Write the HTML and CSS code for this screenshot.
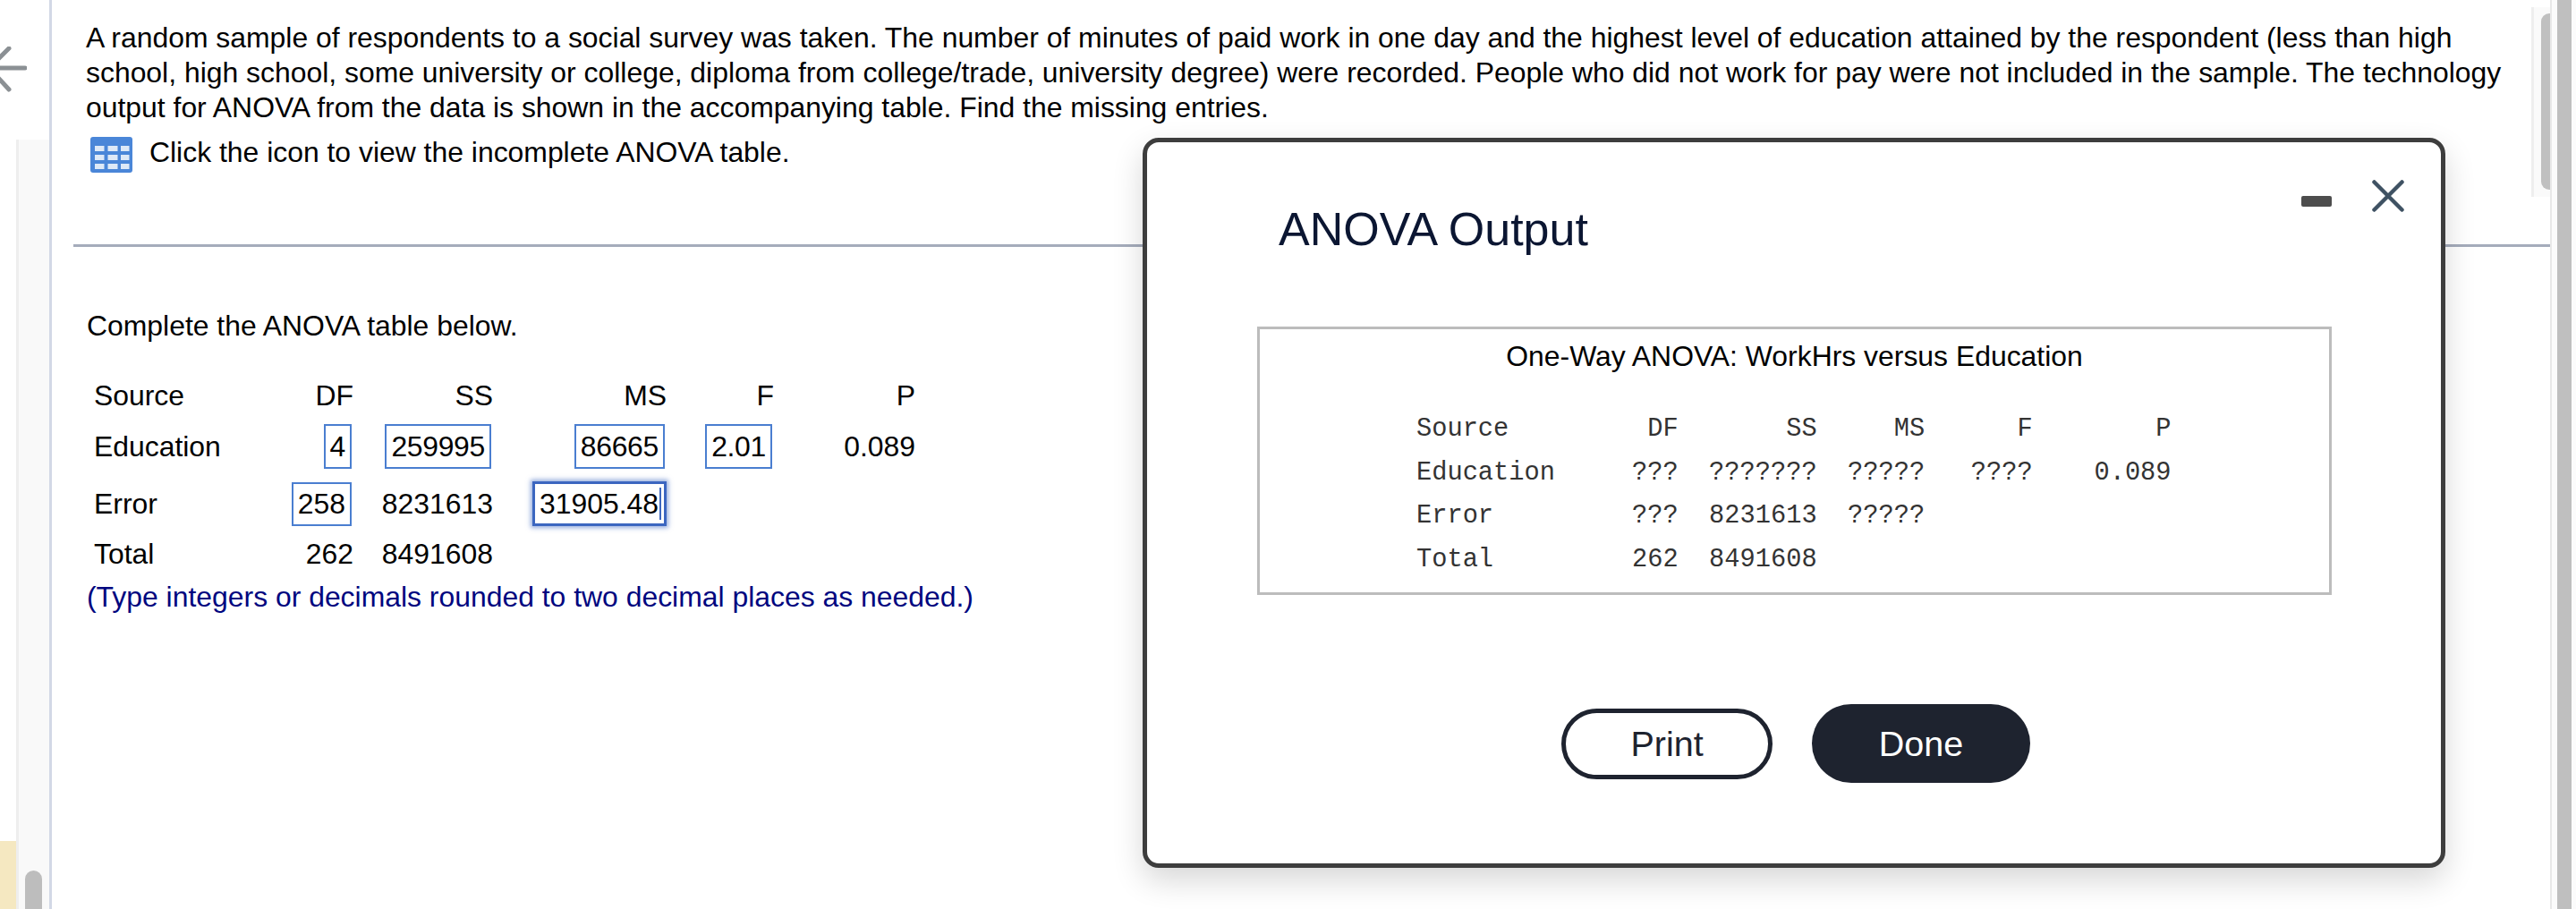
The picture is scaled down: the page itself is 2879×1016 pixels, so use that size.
FILE: index.html
```html
<!DOCTYPE html>
<html lang="en">
<head>
<meta charset="utf-8">
<title>ANOVA Output</title>
<link rel="stylesheet" href="styles.css">
</head>
<body>
<div class="page">
  <aside class="rail">
    <div class="rail-note"></div>
    <div class="rail-track"><div class="rail-thumb"></div></div>
  </aside>
  <svg class="back" width="30" height="52" viewBox="0 0 30 52"><path d="M28 24H-10M10 2L-12 24L10 48" fill="none" stroke="#8b9094" stroke-width="5" stroke-linecap="round" stroke-linejoin="round"/></svg>

  <main class="main">
    <section class="question">
      <p class="prompt">A random sample of respondents to a social survey was taken. The number of minutes of paid work in one day and the highest level of education attained by the respondent (less than high<br>school, high school, some university or college, diploma from college/trade, university degree) were recorded. People who did not work for pay were not included in the sample. The technology<br>output for ANOVA from the data is shown in the accompanying table. Find the missing entries.</p>
      <div class="table-link">
        <svg class="table-icon" width="47" height="40" viewBox="0 0 47 40"><rect width="47" height="40" rx="3" fill="#4a86d8"/><g fill="#fff" opacity=".82"><rect x="5" y="10" width="10.500" height="6"/><rect x="19.500" y="10" width="11" height="6"/><rect x="34" y="10" width="9.500" height="6"/><rect x="5" y="20" width="10.500" height="6"/><rect x="19.500" y="20" width="11" height="6"/><rect x="34" y="20" width="9.500" height="6"/><rect x="5" y="30" width="10.500" height="6"/><rect x="19.500" y="30" width="11" height="6"/><rect x="34" y="30" width="9.500" height="6"/></g></svg>
        <span>Click the icon to view the incomplete ANOVA table.</span>
      </div>
    </section>
    <hr class="rule">
    <section class="answer">
      <p class="instruction">Complete the ANOVA table below.</p>
      <div class="anova">
        <span class="label">Source</span><span class="num">DF</span><span class="num">SS</span><span class="num">MS</span><span class="num">F</span><span class="num">P</span>
        <span class="label">Education</span><span class="num"><span class="input tall">4</span></span><span class="num"><span class="input tall">259995</span></span><span class="num"><span class="input tall">86665</span></span><span class="num"><span class="input tall">2.01</span></span><span class="num">0.089</span>
        <span class="label">Error</span><span class="num"><span class="input">258</span></span><span class="num">8231613</span><span class="num"><span class="input focused">31905.48</span></span><span></span><span></span>
        <span class="label">Total</span><span class="num">262</span><span class="num">8491608</span><span></span><span></span><span></span>
      </div>
      <p class="hint">(Type integers or decimals rounded to two decimal places as needed.)</p>
    </section>
    <div class="inner-scroll"><div class="inner-thumb"></div></div>
  </main>

  <div class="outer-scroll"><div class="outer-thumb"></div></div>

  <div class="modal">
    <div class="modal-tools">
      <span class="minimize"></span>
      <svg width="36" height="36" viewBox="0 0 36 36"><path d="M2.500 2.500L33.500 33.500M33.500 2.500L2.500 33.500" stroke="#3f5263" stroke-width="4.500" stroke-linecap="round"/></svg>
    </div>
    <h1 class="modal-title">ANOVA Output</h1>
    <div class="output">
      <h2 class="output-title">One-Way ANOVA: WorkHrs versus Education</h2>
<pre class="output-data">Source         DF       SS     MS      F        P
Education     ???  ???????  ?????   ????    0.089
Error         ???  8231613  ?????
Total         262  8491608</pre>
    </div>
    <div class="actions">
      <button class="btn btn-outline">Print</button>
      <button class="btn btn-solid">Done</button>
    </div>
  </div>
</div>
</body>
</html>
```

FILE: styles.css
```css
* { box-sizing: border-box; }
html, body { margin: 0; height: 100%; overflow: hidden; background: #fff; }
body { font-family: "Liberation Sans", Arial, sans-serif; color: #000; }

.page { position: relative; display: flex; width: 2879px; height: 1016px; overflow: hidden; }

/* left rail */
.rail { flex: 0 0 58px; display: flex; border-right: 3px solid #d2d8e6; }
.rail-note { flex: 0 0 18px; margin-top: 940px; background: #f5e8c1; }
.rail-track { flex: 1; margin-top: 156px; padding: 817px 8px 0 7px; background: #f9f9f9; border-left: 3px solid #eeeeee; }
.rail-thumb { height: 60px; background: #bdbdbd; border-radius: 10px 10px 0 0; }
.back { position: absolute; left: 0; top: 52px; }

/* main column */
.main { position: relative; flex: 1; min-width: 0; }
.question { padding: 23px 0 0 38px; }
.prompt { margin: 0; font-size: 31.9px; line-height: 39px; white-space: nowrap; }
.table-link { display: flex; align-items: flex-start; gap: 19px; margin: 10px 0 0 5px; font-size: 31.9px; line-height: 40px; }
.table-icon { flex: none; margin-top: 3px; }
.rule { height: 3px; margin: 80px 0 0 24px; border: 0; background: #a5acbb; }

.answer { padding: 69px 0 0 39px; }
.instruction { margin: 0; font-size: 31.9px; line-height: 39px; }
.anova { display: grid; grid-template-columns: 195px 95px 156px 194px 120px 158px; grid-template-rows: 40px 74px 54px 58px; width: max-content; margin: 38px 0 0 8px; font-size: 31.9px; }
.label, .num { display: flex; align-items: center; white-space: nowrap; }
.num { justify-content: flex-end; }
.input { display: inline-flex; align-items: center; position: relative; height: 49px; padding: 0 5px; margin-right: 2px; border: 2.500px solid #4a7ed0; background: #fff; }
.input.tall { height: 50px; padding: 0 5px; letter-spacing: -.3px; }
.input.focused { height: 50px; margin-right: 0; padding: 0 3px 0 5px; border: 3px solid #3c66c0; box-shadow: 0 0 5px 2px rgba(60, 102, 192, .55); }
.input.focused::after { content: ""; width: 2px; height: 36px; margin-left: 1px; background: #3c66c0; }
.hint { margin: 0; font-size: 31.9px; line-height: 39px; color: #00067f; white-space: nowrap; }

/* inner scrollbar */
.inner-scroll { position: absolute; top: 8px; right: 0; width: 21px; height: 212px; padding: 7px 0 8px 8px; background: #fafafa; border-left: 3px solid #eeeeee; }
.inner-thumb { height: 100%; background: #c0c0c0; border-radius: 9px 0 0 9px; }

/* outer scrollbar */
.outer-scroll { flex: 0 0 29px; padding: 0 5px 0 6px; background: #fbfbfb; border-left: 2px solid #e8e8e8; }
.outer-thumb { height: 100%; background: #bfbfbf; }

/* modal window */
.modal { position: absolute; left: 1277px; top: 154px; width: 1456px; height: 816px; padding: 0 122px 0 123px; background: #fff; border: 5px solid #3d3d3d; border-radius: 18px; box-shadow: 0 14px 34px rgba(0, 0, 0, .16); }
.modal-tools { position: absolute; top: 42px; right: 41px; display: flex; align-items: flex-start; gap: 45px; }
.minimize { width: 34px; height: 12px; margin-top: 18px; background: #4d4d4d; border-radius: 2px; }
.modal-title { margin: 67px 0 0 24px; font-size: 52px; font-weight: 400; line-height: 60px; color: #0b1632; }
.output { height: 300px; margin-top: 79px; border: 3px solid #bcbcbc; }
.output-title { margin: 10px 0 0; font-size: 31.9px; font-weight: 400; line-height: 40px; text-align: center; }
.output-data { margin: 38px 0 0 175px; font-family: "Liberation Mono", "Courier New", monospace; font-size: 28.7px; line-height: 48.500px; color: #333; }
.actions { display: flex; align-items: center; gap: 44px; margin: 122px 0 0 340px; }
.btn { font-family: inherit; font-size: 39.5px; border-radius: 44px; padding: 0; }
.btn-outline { width: 236px; height: 79px; color: #1e232f; background: #fff; border: 5px solid #1e232f; }
.btn-solid { width: 244px; height: 88px; color: #fff; background: #1e232f; border: 0; }
```
